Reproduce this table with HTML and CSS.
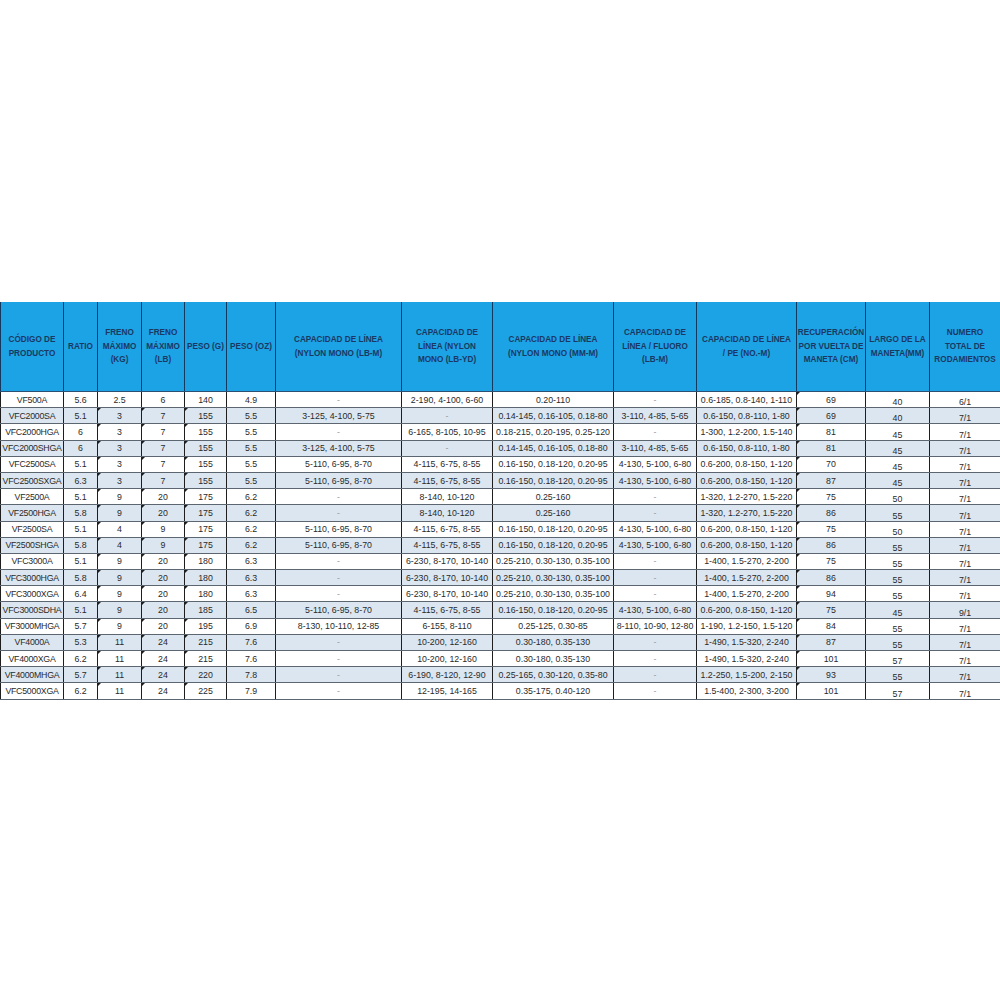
FILE: index.html
```html
<!DOCTYPE html>
<html lang="es">
<head>
<meta charset="utf-8">
<title>Especificaciones</title>
<link rel="stylesheet" href="styles.css">
</head>
<body>
<div class="sheet">
<table class="spec">
<colgroup>
<col style="width:63px"><col style="width:34px"><col style="width:44px"><col style="width:43px"><col style="width:42px"><col style="width:49px"><col style="width:126px"><col style="width:91px"><col style="width:121px"><col style="width:83px"><col style="width:100px"><col style="width:69px"><col style="width:64px"><col style="width:71px">
</colgroup>
<thead>
<tr>
<th>CÓDIGO DE<br>PRODUCTO</th>
<th>RATIO</th>
<th>FRENO<br>MÁXIMO<br>(KG)</th>
<th>FRENO<br>MÁXIMO<br>(LB)</th>
<th>PESO (G)</th>
<th>PESO (OZ)</th>
<th>CAPACIDAD DE LÍNEA<br>(NYLON MONO (LB-M)</th>
<th>CAPACIDAD DE<br>LÍNEA (NYLON<br>MONO (LB-YD)</th>
<th>CAPACIDAD DE LÍNEA<br>(NYLON MONO (MM-M)</th>
<th>CAPACIDAD DE<br>LÍNEA / FLUORO<br>(LB-M)</th>
<th>CAPACIDAD DE LÍNEA<br>/ PE (NO.-M)</th>
<th>RECUPERACIÓN<br>POR VUELTA DE<br>MANETA (CM)</th>
<th>LARGO DE LA<br>MANETA(MM)</th>
<th>NUMERO<br>TOTAL DE<br>RODAMIENTOS</th>
</tr>
</thead>
<tbody>
<tr><td class="c">VF500A</td><td>5.6</td><td>2.5</td><td>6</td><td>140</td><td>4.9</td><td class="d">-</td><td>2-190, 4-100, 6-60</td><td>0.20-110</td><td class="d">-</td><td>0.6-185, 0.8-140, 1-110</td><td class="m">69</td><td class="lo">40</td><td class="lo">6/1</td></tr>
<tr class="alt"><td class="c">VFC2000SA</td><td>5.1</td><td class="m">3</td><td class="m">7</td><td class="m">155</td><td>5.5</td><td>3-125, 4-100, 5-75</td><td class="d">-</td><td>0.14-145, 0.16-105, 0.18-80</td><td>3-110, 4-85, 5-65</td><td>0.6-150, 0.8-110, 1-80</td><td class="m">69</td><td class="lo">40</td><td class="lo">7/1</td></tr>
<tr><td class="c">VFC2000HGA</td><td>6</td><td class="m">3</td><td class="m">7</td><td class="m">155</td><td>5.5</td><td class="d">-</td><td>6-165, 8-105, 10-95</td><td>0.18-215, 0.20-195, 0.25-120</td><td class="d">-</td><td>1-300, 1.2-200, 1.5-140</td><td class="m">81</td><td class="lo">45</td><td class="lo">7/1</td></tr>
<tr class="alt"><td class="c">VFC2000SHGA</td><td>6</td><td class="m">3</td><td class="m">7</td><td class="m">155</td><td>5.5</td><td>3-125, 4-100, 5-75</td><td class="d">-</td><td>0.14-145, 0.16-105, 0.18-80</td><td>3-110, 4-85, 5-65</td><td>0.6-150, 0.8-110, 1-80</td><td class="m">81</td><td class="lo">45</td><td class="lo">7/1</td></tr>
<tr><td class="c">VFC2500SA</td><td>5.1</td><td class="m">3</td><td class="m">7</td><td class="m">155</td><td>5.5</td><td>5-110, 6-95, 8-70</td><td>4-115, 6-75, 8-55</td><td>0.16-150, 0.18-120, 0.20-95</td><td>4-130, 5-100, 6-80</td><td>0.6-200, 0.8-150, 1-120</td><td class="m">70</td><td class="lo">45</td><td class="lo">7/1</td></tr>
<tr class="alt"><td class="c">VFC2500SXGA</td><td>6.3</td><td class="m">3</td><td class="m">7</td><td class="m">155</td><td>5.5</td><td>5-110, 6-95, 8-70</td><td>4-115, 6-75, 8-55</td><td>0.16-150, 0.18-120, 0.20-95</td><td>4-130, 5-100, 6-80</td><td>0.6-200, 0.8-150, 1-120</td><td class="m">87</td><td class="lo">45</td><td class="lo">7/1</td></tr>
<tr><td class="c">VF2500A</td><td>5.1</td><td class="m">9</td><td class="m">20</td><td class="m">175</td><td>6.2</td><td class="d">-</td><td>8-140, 10-120</td><td>0.25-160</td><td class="d">-</td><td>1-320, 1.2-270, 1.5-220</td><td class="m">75</td><td class="lo">50</td><td class="lo">7/1</td></tr>
<tr class="alt"><td class="c">VF2500HGA</td><td>5.8</td><td class="m">9</td><td class="m">20</td><td class="m">175</td><td>6.2</td><td class="d">-</td><td>8-140, 10-120</td><td>0.25-160</td><td class="d">-</td><td>1-320, 1.2-270, 1.5-220</td><td class="m">86</td><td class="lo">55</td><td class="lo">7/1</td></tr>
<tr><td class="c">VF2500SA</td><td>5.1</td><td class="m">4</td><td class="m">9</td><td class="m">175</td><td>6.2</td><td>5-110, 6-95, 8-70</td><td>4-115, 6-75, 8-55</td><td>0.16-150, 0.18-120, 0.20-95</td><td>4-130, 5-100, 6-80</td><td>0.6-200, 0.8-150, 1-120</td><td class="m">75</td><td class="lo">50</td><td class="lo">7/1</td></tr>
<tr class="alt"><td class="c">VF2500SHGA</td><td>5.8</td><td class="m">4</td><td class="m">9</td><td class="m">175</td><td>6.2</td><td>5-110, 6-95, 8-70</td><td>4-115, 6-75, 8-55</td><td>0.16-150, 0.18-120, 0.20-95</td><td>4-130, 5-100, 6-80</td><td>0.6-200, 0.8-150, 1-120</td><td class="m">86</td><td class="lo">55</td><td class="lo">7/1</td></tr>
<tr><td class="c">VFC3000A</td><td>5.1</td><td class="m">9</td><td class="m">20</td><td class="m">180</td><td>6.3</td><td class="d">-</td><td>6-230, 8-170, 10-140</td><td>0.25-210, 0.30-130, 0.35-100</td><td class="d">-</td><td>1-400, 1.5-270, 2-200</td><td class="m">75</td><td class="lo">55</td><td class="lo">7/1</td></tr>
<tr class="alt"><td class="c">VFC3000HGA</td><td>5.8</td><td class="m">9</td><td class="m">20</td><td class="m">180</td><td>6.3</td><td class="d">-</td><td>6-230, 8-170, 10-140</td><td>0.25-210, 0.30-130, 0.35-100</td><td class="d">-</td><td>1-400, 1.5-270, 2-200</td><td class="m">86</td><td class="lo">55</td><td class="lo">7/1</td></tr>
<tr><td class="c">VFC3000XGA</td><td>6.4</td><td class="m">9</td><td class="m">20</td><td class="m">180</td><td>6.3</td><td class="d">-</td><td>6-230, 8-170, 10-140</td><td>0.25-210, 0.30-130, 0.35-100</td><td class="d">-</td><td>1-400, 1.5-270, 2-200</td><td class="m">94</td><td class="lo">55</td><td class="lo">7/1</td></tr>
<tr class="alt"><td class="c">VFC3000SDHA</td><td>5.1</td><td class="m">9</td><td class="m">20</td><td class="m">185</td><td>6.5</td><td>5-110, 6-95, 8-70</td><td>4-115, 6-75, 8-55</td><td>0.16-150, 0.18-120, 0.20-95</td><td>4-130, 5-100, 6-80</td><td>0.6-200, 0.8-150, 1-120</td><td class="m">75</td><td class="lo">45</td><td class="lo">9/1</td></tr>
<tr><td class="c">VF3000MHGA</td><td>5.7</td><td class="m">9</td><td class="m">20</td><td class="m">195</td><td>6.9</td><td>8-130, 10-110, 12-85</td><td>6-155, 8-110</td><td>0.25-125, 0.30-85</td><td>8-110, 10-90, 12-80</td><td>1-190, 1.2-150, 1.5-120</td><td class="m">84</td><td class="lo">55</td><td class="lo">7/1</td></tr>
<tr class="alt"><td class="c">VF4000A</td><td>5.3</td><td class="m">11</td><td class="m">24</td><td class="m">215</td><td>7.6</td><td class="d">-</td><td>10-200, 12-160</td><td>0.30-180, 0.35-130</td><td class="d">-</td><td>1-490, 1.5-320, 2-240</td><td class="m">87</td><td class="lo">55</td><td class="lo">7/1</td></tr>
<tr><td class="c">VF4000XGA</td><td>6.2</td><td class="m">11</td><td class="m">24</td><td class="m">215</td><td>7.6</td><td class="d">-</td><td>10-200, 12-160</td><td>0.30-180, 0.35-130</td><td class="d">-</td><td>1-490, 1.5-320, 2-240</td><td class="m">101</td><td class="lo">57</td><td class="lo">7/1</td></tr>
<tr class="alt"><td class="c">VF4000MHGA</td><td>5.7</td><td class="m">11</td><td class="m">24</td><td class="m">220</td><td>7.8</td><td class="d">-</td><td>6-190, 8-120, 12-90</td><td>0.25-165, 0.30-120, 0.35-80</td><td class="d">-</td><td>1.2-250, 1.5-200, 2-150</td><td class="m">93</td><td class="lo">55</td><td class="lo">7/1</td></tr>
<tr><td class="c">VFC5000XGA</td><td>6.2</td><td class="m">11</td><td class="m">24</td><td class="m">225</td><td>7.9</td><td class="d">-</td><td>12-195, 14-165</td><td>0.35-175, 0.40-120</td><td class="d">-</td><td>1.5-400, 2-300, 3-200</td><td class="m">101</td><td class="lo">57</td><td class="lo">7/1</td></tr>
</tbody>
</table>
</div>
</body>
</html>
```
FILE: styles.css
```css
html, body {
  margin: 0;
  padding: 0;
  background: #ffffff;
}

.sheet {
  padding-top: 302px;
  width: 1000px;
}

.spec {
  width: 1000px;
  border-collapse: collapse;
  table-layout: fixed;
  font-family: "Liberation Sans", Arial, sans-serif;
}

.spec th {
  background: #1ca3e6;
  color: #1b3862;
  font-size: 8.2px;
  font-weight: bold;
  line-height: 13.5px;
  height: 89px;
  padding: 0;
  text-align: center;
  vertical-align: middle;
  white-space: nowrap;
  border-left: 1px solid #143a62;
  border-right: 1px solid #143a62;
  border-top: 0;
  border-bottom: 1px solid #2d4f72;
}

.spec td {
  position: relative;
  height: 15.2px;
  padding: 0;
  font-size: 8.8px;
  line-height: 10px;
  color: #2a2a2a;
  text-align: center;
  vertical-align: middle;
  white-space: nowrap;
  border-left: 1px solid #1e1e1e;
  border-right: 1px solid #1e1e1e;
  border-top: 1px solid #5c6670;
  border-bottom: 1px solid #5c6670;
}

.spec td.c {
  letter-spacing: -0.25px;
}

.spec tr.alt td {
  background: #dbe6f1;
}

.spec td.d {
  color: #9a9a9a;
}

.spec td.lo {
  vertical-align: bottom;
  padding-bottom: 0;
}

.spec td.m::before {
  content: "";
  position: absolute;
  left: 0;
  top: 0;
  border-top: 3px solid #1e1e1e;
  border-right: 3px solid transparent;
}
```
